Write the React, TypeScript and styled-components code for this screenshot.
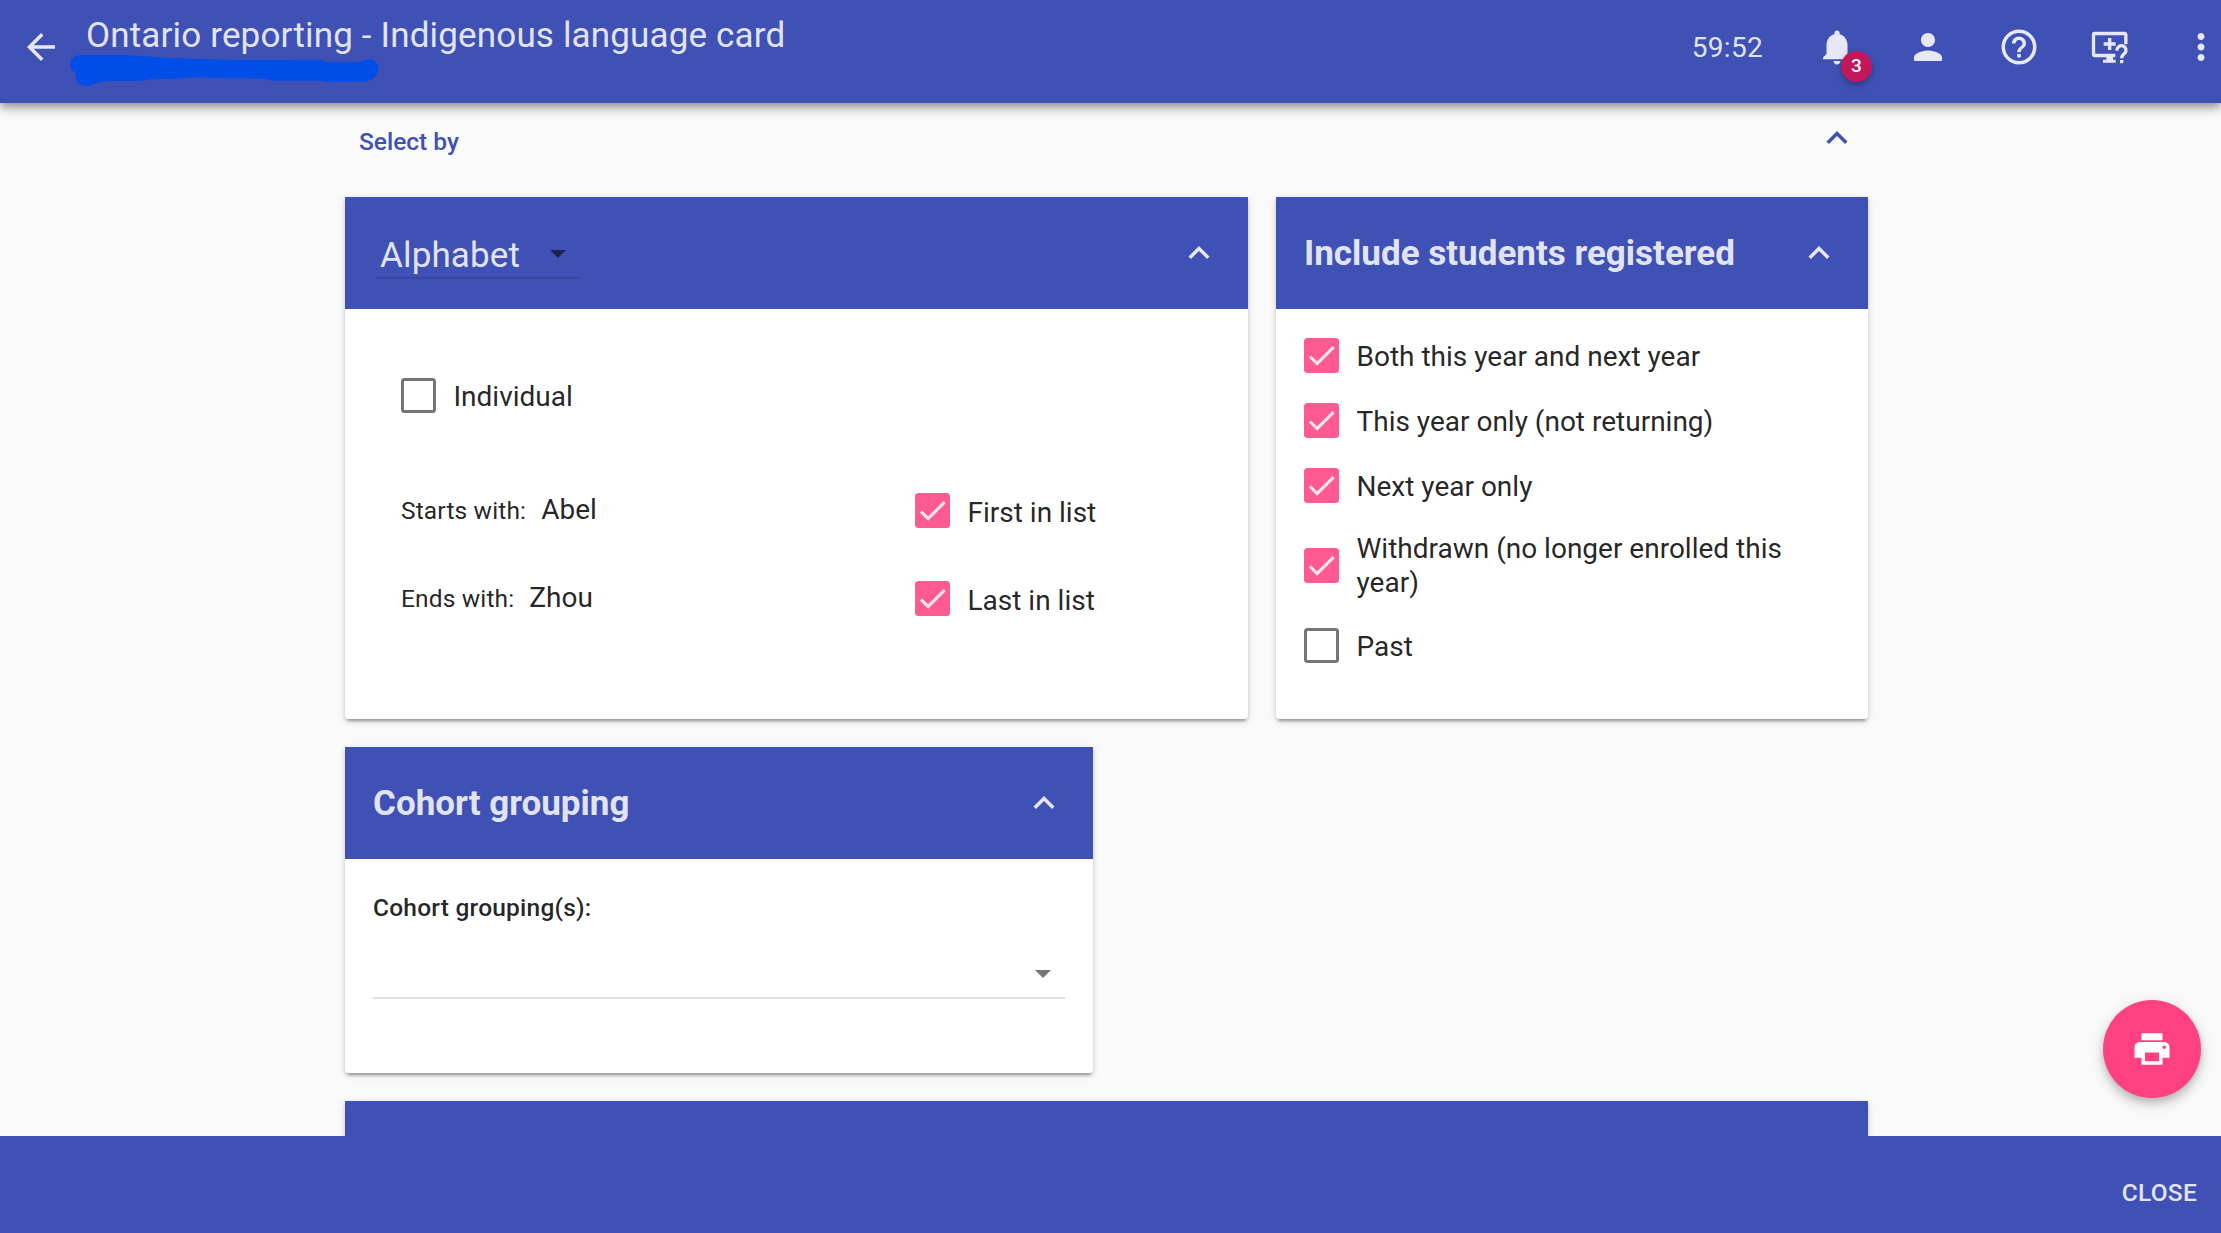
import React from 'react';
import styled, { createGlobalStyle, css } from 'styled-components';

const INDIGO = '#3f51b5';
const ON_INDIGO = 'rgba(255, 255, 255, 0.87)';

const GlobalStyle = createGlobalStyle`
  * { box-sizing: border-box; }
  body { margin: 0; background: #fafafa; overflow: hidden; }
`;

const Page = styled.div`
  position: relative;
  display: flex;
  flex-direction: column;
  height: 1233px;
  overflow: hidden;
  background: #fafafa;
  color: rgba(0, 0, 0, 0.87);
  font-family: Roboto, sans-serif;
  font-size: 28px;
`;

const Toolbar = styled.header`
  position: relative;
  z-index: 2;
  display: flex;
  flex: none;
  height: 103px;
  padding-left: 20px;
  background: ${INDIGO};
  color: ${ON_INDIGO};
  box-shadow: 0 4px 7px -1px rgba(0, 0, 0, 0.26), 0 7px 10px rgba(0, 0, 0, 0.14), 0 2px 16px rgba(0, 0, 0, 0.12);
`;

const Title = styled.h1`
  margin: 15px 0 0 24px;
  font-size: 35px;
  font-weight: 400;
  line-height: 42px;
  letter-spacing: 0.16px;
  white-space: nowrap;
`;

const Marker = styled.svg`
  position: absolute;
  left: 60px;
  top: 45px;
`;

const Actions = styled.div`
  display: flex;
  align-items: center;
  gap: 49px;
  height: 42px;
  margin: 26px -1px 0 auto;
`;

const Timer = styled.span`
  margin-right: 4px;
  padding-top: 2px;
  line-height: 42px;
  letter-spacing: 0.3px;
`;

const IconSlot = styled.span<{ $top?: number }>`
  position: relative;
  display: block;
  flex: none;
  width: 42px;
  height: 42px;
  margin-top: ${(p) => p.$top ?? 0}px;
`;

const Svg = styled.svg`
  display: block;
  flex: none;
  width: 42px;
  height: 42px;
  fill: currentColor;
`;

const Badge = styled.span`
  position: absolute;
  left: 25px;
  top: 25px;
  width: 31px;
  height: 31px;
  border-radius: 50%;
  background: #c2185b;
  color: #fff;
  font-size: 19px;
  font-weight: 500;
  line-height: 30px;
  text-align: center;
  box-shadow: 0 3px 6px rgba(0, 0, 0, 0.3);
`;

const Content = styled.main`
  display: flex;
  flex: 1;
  flex-direction: column;
  gap: 28px;
  min-height: 0;
  width: 1523px;
  margin-left: 345px;
`;

const SectionBar = styled.div`
  display: flex;
  flex: none;
  justify-content: space-between;
  height: 66px;
  padding: 14px 10px 0 14px;
  color: ${INDIGO};
`;

const SectionTitle = styled.h2`
  margin: 7px 0 0;
  font-size: 24.5px;
  font-weight: 500;
  line-height: 36px;
`;

const CardRow = styled.div`
  display: flex;
  flex: none;
  gap: 28px;
`;

const Card = styled.section<{ $width: number; $height: number }>`
  flex: none;
  width: ${(p) => p.$width}px;
  height: ${(p) => p.$height}px;
  border-radius: 0 0 4px 4px;
  background: #fff;
  box-shadow: 0 5px 2px -3.5px rgba(0, 0, 0, 0.2), 0 3px 3.5px rgba(0, 0, 0, 0.14), 0 2px 9px rgba(0, 0, 0, 0.12);
`;

const CardHeader = styled.div`
  display: flex;
  align-items: center;
  justify-content: space-between;
  height: 112px;
  padding: 0 28px;
  background: ${INDIGO};
  color: ${ON_INDIGO};
`;

const CardTitle = styled.h3`
  margin: 2px 0 0;
  font-size: 35px;
  font-weight: 700;
  line-height: 42px;
`;

const HeaderSelect = styled.div`
  display: flex;
  align-items: center;
  justify-content: space-between;
  width: 203px;
  height: 50px;
  margin: 2px 0 0 3px;
  padding: 2px 13px 0 4px;
  border-bottom: 2px solid rgba(0, 0, 0, 0.12);
  font-size: 35px;
  letter-spacing: 0.15px;
`;

const HeaderSelectValue = styled.span`
  padding-top: 3px;
`;

const Caret = styled.span<{ $color: string }>`
  width: 0;
  height: 0;
  border: 8.5px solid transparent;
  border-top-color: ${(p) => p.$color};
  border-bottom: 0;
`;

const AlphabetBody = styled.div`
  padding: 67px 56px 0;
`;

const RangeRows = styled.div`
  display: flex;
  flex-direction: column;
  gap: 46px;
  margin-top: 75px;
`;

const RangeRow = styled.div`
  display: grid;
  grid-template-columns: 514px 1fr;
  align-items: center;
  height: 42px;
`;

const RangeField = styled.div`
  display: flex;
  align-items: baseline;
  gap: 15px;
  line-height: 42px;
`;

const RangeLabel = styled.span`
  font-size: 24.5px;
  letter-spacing: 0.15px;
`;

const OptionList = styled.div`
  display: flex;
  flex-direction: column;
  gap: 27px;
  padding: 27px 28px 0;
`;

const Option = styled.label`
  display: flex;
  align-items: center;
  gap: 17.5px;
  min-height: 38px;
`;

const OptionText = styled.span<{ $multi?: boolean }>`
  line-height: 34px;
  padding-top: ${(p) => (p.$multi ? 1 : 4)}px;
  margin-bottom: ${(p) => (p.$multi ? -1 : 0)}px;
`;

const Box = styled.span<{ $checked?: boolean }>`
  display: block;
  flex: none;
  width: 35px;
  height: 35px;
  border-radius: 3.5px;
  ${(p) =>
    p.$checked
      ? css`
          background: #ff5b92;
        `
      : css`
          border: 3px solid #757575;
        `}
`;

const Tick = styled.svg`
  display: block;
  width: 35px;
  height: 35px;
  fill: none;
  stroke: #ffe6ef;
  stroke-width: 2.13;
`;

const CohortBody = styled.div`
  padding: 31px 28px 0;
`;

const FieldLabel = styled.div`
  font-size: 24.5px;
  font-weight: 500;
  line-height: 36px;
  letter-spacing: 0.22px;
`;

const CohortSelect = styled.div`
  display: flex;
  align-items: center;
  justify-content: flex-end;
  height: 48px;
  margin-top: 25px;
  padding: 0 14px 0 0;
  border-bottom: 2px solid #e0e0e0;
`;

const Footer = styled.footer`
  position: relative;
  z-index: 1;
  display: flex;
  flex: none;
  justify-content: flex-end;
  height: 97px;
  padding: 39px 24px 0 0;
  background: ${INDIGO};
`;

const CloseButton = styled.button`
  height: 36px;
  padding: 0;
  border: 0;
  background: none;
  color: ${ON_INDIGO};
  font: 500 24.5px/36px Roboto, sans-serif;
  letter-spacing: 0.25px;
`;

const PrintButton = styled.button`
  position: absolute;
  z-index: 3;
  right: 20px;
  bottom: 135px;
  display: flex;
  align-items: center;
  justify-content: center;
  width: 98px;
  height: 98px;
  padding: 0;
  border: 0;
  border-radius: 50%;
  background: #ff4081;
  color: #fff;
  box-shadow: 0 5px 9px -2px rgba(0, 0, 0, 0.2), 0 8px 14px rgba(0, 0, 0, 0.1), 0 2px 18px rgba(0, 0, 0, 0.08);
`;

function Icon({ d }: { d: string }) {
  return (
    <Svg viewBox="0 0 24 24">
      <path d={d} />
    </Svg>
  );
}

const paths = {
  back: 'M20 11H7.83l5.59-5.59L12 4l-8 8 8 8 1.41-1.41L7.83 13H20v-2z',
  bell: 'M12 22c1.1 0 2-.9 2-2h-4c0 1.1.89 2 2 2zm6-6v-5c0-3.07-1.64-5.64-4.5-6.32V4c0-.83-.67-1.5-1.5-1.5s-1.5.67-1.5 1.5v.68C7.63 5.36 6 7.92 6 11v5l-2 2v1h16v-1l-2-2z',
  person: 'M12 12c2.21 0 4-1.79 4-4s-1.79-4-4-4-4 1.79-4 4 1.79 4 4 4zm0 2c-2.67 0-8 1.34-8 4v2h16v-2c0-2.66-5.33-4-8-4z',
  help: 'M11 18h2v-2h-2v2zm1-16C6.48 2 2 6.48 2 12s4.48 10 10 10 10-4.48 10-10S17.52 2 12 2zm0 18c-4.41 0-8-3.59-8-8s3.59-8 8-8 8 3.59 8 8-3.59 8-8 8zm0-14c-2.21 0-4 1.79-4 4h2c0-1.1.9-2 2-2s2 .9 2 2c0 2-3 1.75-3 5h2c0-2.25 3-2.5 3-5 0-2.21-1.79-4-4-4z',
  more: 'M12 8c1.1 0 2-.9 2-2s-.9-2-2-2-2 .9-2 2 .9 2 2 2zm0 2c-1.1 0-2 .9-2 2s.9 2 2 2 2-.9 2-2-.9-2-2-2zm0 6c-1.1 0-2 .9-2 2s.9 2 2 2 2-.9 2-2-.9-2-2-2z',
  up: 'M12 8l-6 6 1.41 1.41L12 10.83l4.59 4.58L18 14z',
  print: 'M19 8H5c-1.66 0-3 1.34-3 3v6h4v4h12v-4h4v-6c0-1.66-1.34-3-3-3zm-3 11H8v-5h8v5zm3-7c-.55 0-1-.45-1-1s.45-1 1-1 1 .45 1 1-.45 1-1 1zm-1-9H6v4h12V3z',
};

function RemoteHelpIcon() {
  return (
    <Svg viewBox="0 0 126 126">
      <path
        d="M110.5 55V26a3.500 3.500 0 0 0-3.500-3.500H17a3.500 3.500 0 0 0-3.500 3.500V85a3.500 3.500 0 0 0 3.500 3.500H79M62 36V72M44 54H80"
        fill="none"
        stroke="currentColor"
        strokeWidth="10"
      />
      <path d="M52 92h20v9h8v9.500H42V101h10z" />
      <path d="M84 74A13.500 13.500 0 1 1 107.500 81.500Q98 88 98 97" fill="none" stroke="currentColor" strokeWidth="10" />
      <path d="M93 102h10v9.500h-10z" />
    </Svg>
  );
}

function Check({ label, checked, multi }: { label: string; checked?: boolean; multi?: boolean }) {
  return (
    <Option>
      <Box $checked={checked}>
        {checked && (
          <Tick viewBox="0 0 24 24">
            <path d="M4.100 12.700 9 17.600 20.300 6.300" />
          </Tick>
        )}
      </Box>
      <OptionText $multi={multi}>{label}</OptionText>
    </Option>
  );
}

export default function App() {
  return (
    <Page>
      <GlobalStyle />
      <Toolbar>
        <IconSlot $top={26}>
          <Icon d={paths.back} />
        </IconSlot>
        <Title>Ontario reporting - Indigenous language card</Title>
        <Marker width="340" height="58" viewBox="0 0 1020 174">
          <path
            fill="#004ee8"
            d="M60 30L200 30L320 38Q420 42 520 45L785 46L800 51L900 51Q925 38 942 45Q958 58 955 78Q948 104 915 110L800 110L780 107L640 107L610 101L500 100L400 97L340 101L270 103L240 108L140 108Q110 112 95 120Q70 128 55 115Q45 103 46 82Q28 75 30 55Q34 33 60 30Z"
          />
        </Marker>
        <Actions>
          <Timer>59:52</Timer>
          <IconSlot>
            <Icon d={paths.bell} />
            <Badge>3</Badge>
          </IconSlot>
          <Icon d={paths.person} />
          <Icon d={paths.help} />
          <RemoteHelpIcon />
          <Icon d={paths.more} />
        </Actions>
      </Toolbar>

      <Content>
        <SectionBar>
          <SectionTitle>Select by</SectionTitle>
          <Icon d={paths.up} />
        </SectionBar>

        <CardRow>
          <Card $width={903} $height={522}>
            <CardHeader>
              <HeaderSelect>
                <HeaderSelectValue>Alphabet</HeaderSelectValue>
                <Caret $color="#1c2451" />
              </HeaderSelect>
              <Icon d={paths.up} />
            </CardHeader>
            <AlphabetBody>
              <Check label="Individual" />
              <RangeRows>
                <RangeRow>
                  <RangeField>
                    <RangeLabel>Starts with:</RangeLabel>
                    <span>Abel</span>
                  </RangeField>
                  <Check label="First in list" checked />
                </RangeRow>
                <RangeRow>
                  <RangeField>
                    <RangeLabel>Ends with:</RangeLabel>
                    <span>Zhou</span>
                  </RangeField>
                  <Check label="Last in list" checked />
                </RangeRow>
              </RangeRows>
            </AlphabetBody>
          </Card>

          <Card $width={592} $height={522}>
            <CardHeader>
              <CardTitle>Include students registered</CardTitle>
              <Icon d={paths.up} />
            </CardHeader>
            <OptionList>
              <Check label="Both this year and next year" checked />
              <Check label="This year only (not returning)" checked />
              <Check label="Next year only" checked />
              <Check label="Withdrawn (no longer enrolled this year)" checked multi />
              <Check label="Past" />
            </OptionList>
          </Card>
        </CardRow>

        <Card $width={748} $height={326}>
          <CardHeader>
            <CardTitle>Cohort grouping</CardTitle>
            <Icon d={paths.up} />
          </CardHeader>
          <CohortBody>
            <FieldLabel>Cohort grouping(s):</FieldLabel>
            <CohortSelect>
              <Caret $color="#757575" />
            </CohortSelect>
          </CohortBody>
        </Card>

        <Card $width={1523} $height={326}>
          <CardHeader />
        </Card>
      </Content>

      <Footer>
        <CloseButton>CLOSE</CloseButton>
      </Footer>
      <PrintButton aria-label="Print">
        <Icon d={paths.print} />
      </PrintButton>
    </Page>
  );
}
